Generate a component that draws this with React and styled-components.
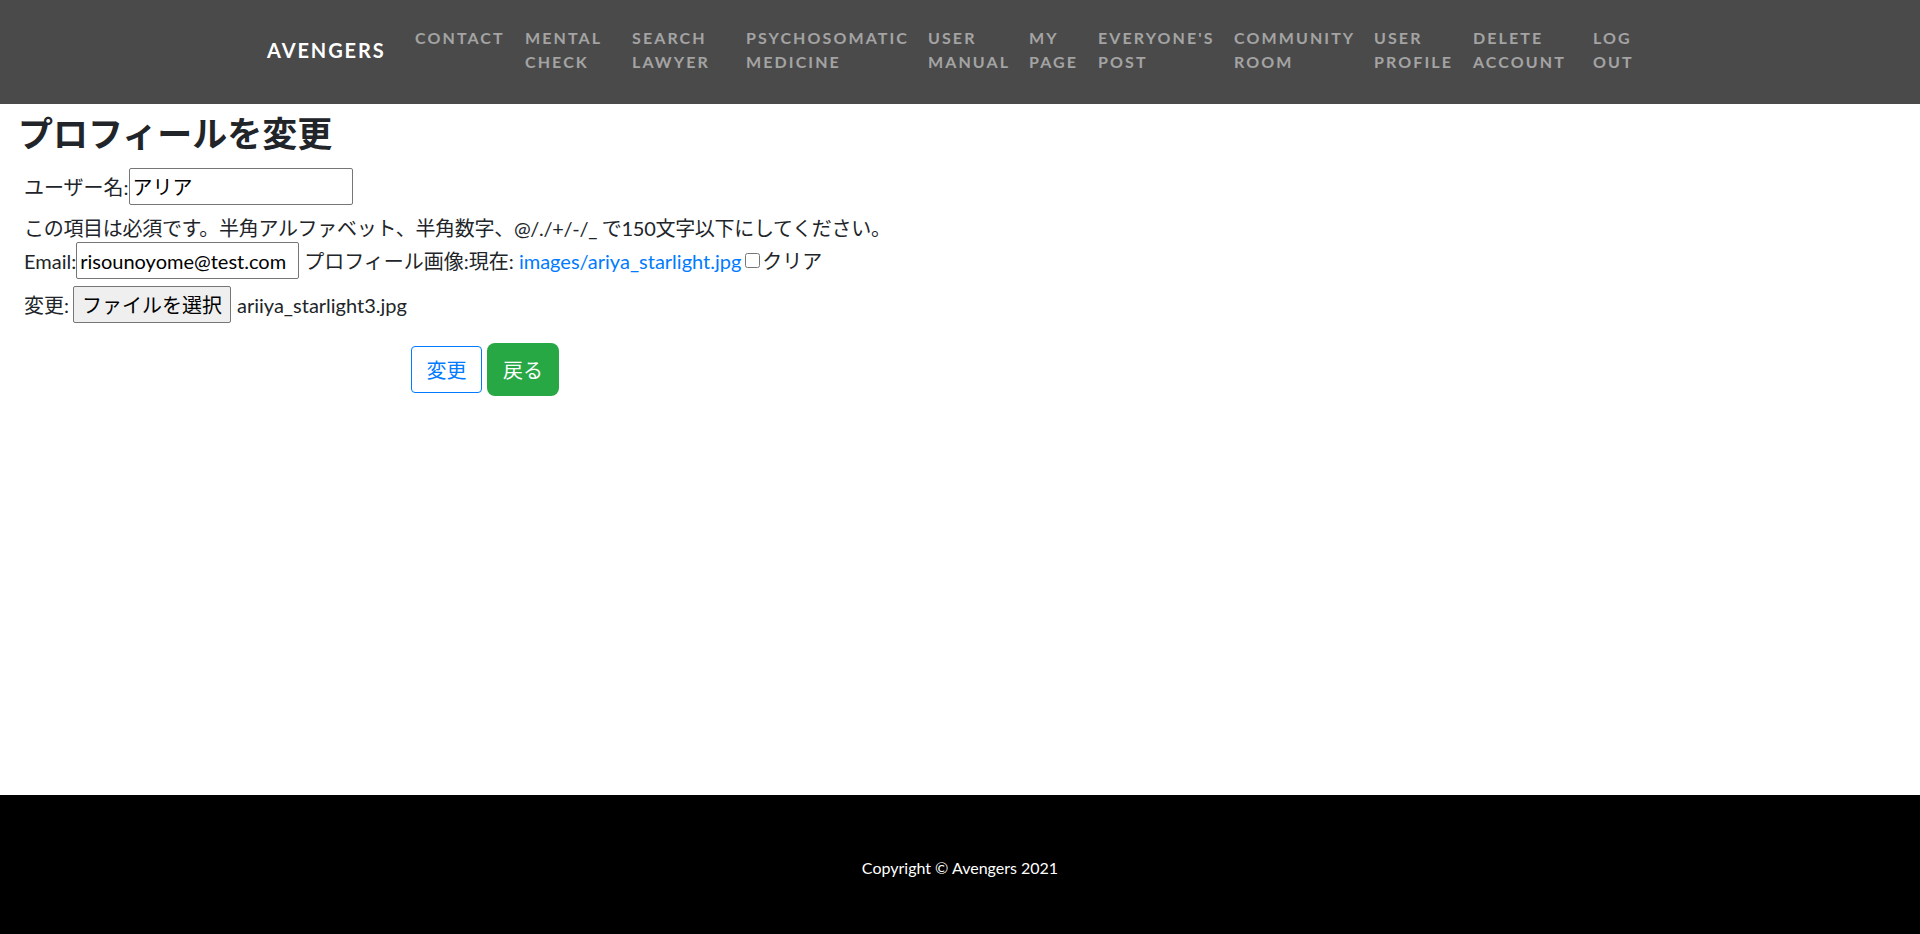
import React from "react";
import styled, { createGlobalStyle } from "styled-components";

const Global = createGlobalStyle`
  html, body { margin: 0; padding: 0; }
  body {
    font-family: Lato, "Noto Sans CJK JP", sans-serif;
    color: #212529;
    background: #fff;
  }
  * { box-sizing: border-box; }
`;

const Page = styled.div`
  min-height: 100vh;
  display: flex;
  flex-direction: column;
`;

const NavBar = styled.header`
  height: 104px;
  background: #4a4a4a;
  display: flex;
  justify-content: center;
`;

const NavInner = styled.div`
  width: 1386px;
  display: flex;
  align-items: flex-start;
`;

const Brand = styled.a`
  flex: 0 0 148px;
  align-self: center;
  color: #fff;
  font-family: Lato, sans-serif;
  font-weight: 700;
  font-size: 20px;
  letter-spacing: 1.9px;
  text-transform: uppercase;
  text-decoration: none;
  line-height: 1.5;
  margin-top: -4px;
`;

const NavList = styled.ul`
  list-style: none;
  margin: 26px 0 0;
  padding: 0;
  display: flex;
`;

const NavItem = styled.li`
  flex: 0 0 ${(p) => p.$w}px;
`;

const NavLink = styled.a`
  display: block;
  color: rgba(255, 255, 255, 0.5);
  font-family: Lato, sans-serif;
  font-weight: 700;
  font-size: 16px;
  line-height: 24px;
  letter-spacing: 2.1px;
  text-transform: uppercase;
  text-decoration: none;
  white-space: nowrap;
`;

const Main = styled.main`
  flex: 1;
  padding: 8px 0 0 18px;
`;

const Title = styled.h2`
  margin: 0 0 14px;
  font-size: 35px;
  font-weight: 700;
  line-height: 42px;
  color: #212529;
`;

const Form = styled.form`
  padding-left: 6px;
  width: 922px;
  font-size: 20px;
  display: flex;
  flex-direction: column;
`;

const Row = styled.div`
  display: flex;
  align-items: center;
  height: ${(p) => p.$h || 37}px;
  margin-top: ${(p) => p.$mt || 0}px;
  white-space: pre;
  letter-spacing: ${(p) => p.$ls || 0}px;
`;

const TextInput = styled.input`
  width: ${(p) => p.$w}px;
  height: 37px;
  border: 1px solid #767676;
  border-radius: 2px;
  padding: 1px 3px;
  font-family: Lato, "Noto Sans CJK JP", sans-serif;
  font-size: 20px;
  color: #000;
  outline: none;
  margin: 0 ${(p) => p.$mr || 0}px 0 0;
`;

const Link = styled.a`
  color: #007bff;
  text-decoration: none;
`;

const Check = styled.input`
  width: 15px;
  height: 15px;
  margin: 0 2px 0 4px;
`;

const FileButton = styled.button`
  height: 37px;
  padding: 0 8px;
  margin: 0 6px 0 4px;
  background: #efefef;
  border: 1px solid #767676;
  border-radius: 2px;
  font-family: Lato, "Noto Sans CJK JP", sans-serif;
  font-size: 20px;
  color: #000;
`;

const Buttons = styled.div`
  display: flex;
  align-items: center;
  gap: 5px;
  margin-top: 20px;
  padding-left: 387px;
`;

const Button = styled.button`
  font-family: Lato, "Noto Sans CJK JP", sans-serif;
  font-size: 20px;
  line-height: 30px;
  cursor: pointer;
  ${(p) =>
    p.$variant === "outline"
      ? `
    padding: 7.5px 14.5px;
    background: #fff;
    color: #007bff;
    border: 1px solid #007bff;
    border-radius: 4px;
  `
      : `
    padding: 11.5px 16px;
    background: #28a745;
    color: #fff;
    border: 0;
    border-radius: 8px;
  `}
`;

const Footer = styled.footer`
  height: 139px;
  background: #000;
  color: #fff;
  display: flex;
  align-items: center;
  justify-content: center;
  font-family: Lato, sans-serif;
  font-size: 16px;
  padding-top: 6px;
`;

const navItems = [
  { w: 110, lines: ["Contact"] },
  { w: 107, lines: ["Mental", "Check"] },
  { w: 114, lines: ["Search", "Lawyer"] },
  { w: 182, lines: ["Psychosomatic", "Medicine"] },
  { w: 101, lines: ["User", "Manual"] },
  { w: 69, lines: ["My", "Page"] },
  { w: 136, lines: ["Everyone's", "Post"] },
  { w: 140, lines: ["Community", "Room"] },
  { w: 99, lines: ["User", "Profile"] },
  { w: 120, lines: ["Delete", "Account"] },
  { w: 60, lines: ["Log", "Out"] },
];

export default function App() {
  return (
    <Page>
      <Global />
      <NavBar>
        <NavInner>
          <Brand href="#">Avengers</Brand>
          <NavList>
            {navItems.map((it, i) => (
              <NavItem key={i} $w={it.w}>
                <NavLink href="#">
                  {it.lines.map((l, j) => (
                    <React.Fragment key={j}>
                      {j > 0 && <br />}
                      {l}
                    </React.Fragment>
                  ))}
                </NavLink>
              </NavItem>
            ))}
          </NavList>
        </NavInner>
      </NavBar>
      <Main>
        <Title>プロフィールを変更</Title>
        <Form onSubmit={(e) => e.preventDefault()}>
          <Row>
            <span>ユーザー名:</span>
            <TextInput $w={224} defaultValue="アリア" />
          </Row>
          <Row $h={30} $mt={7} $ls={-0.3}>
            この項目は必須です。半角アルファベット、半角数字、@/./+/-/_ で150文字以下にしてください。
          </Row>
          <Row>
            <span>Email:</span>
            <TextInput $w={223} $mr={5} defaultValue="risounoyome@test.com" />
            <span>プロフィール画像:現在: </span>
            <Link href="#">images/ariya_starlight.jpg</Link>
            <Check type="checkbox" />
            <span>クリア</span>
          </Row>
          <Row $mt={7}>
            <span>変更:</span>
            <FileButton type="button">ファイルを選択</FileButton>
            <span>ariiya_starlight3.jpg</span>
          </Row>
          <Buttons>
            <Button $variant="outline" type="submit">変更</Button>
            <Button type="button">戻る</Button>
          </Buttons>
        </Form>
      </Main>
      <Footer>Copyright © Avengers 2021</Footer>
    </Page>
  );
}
